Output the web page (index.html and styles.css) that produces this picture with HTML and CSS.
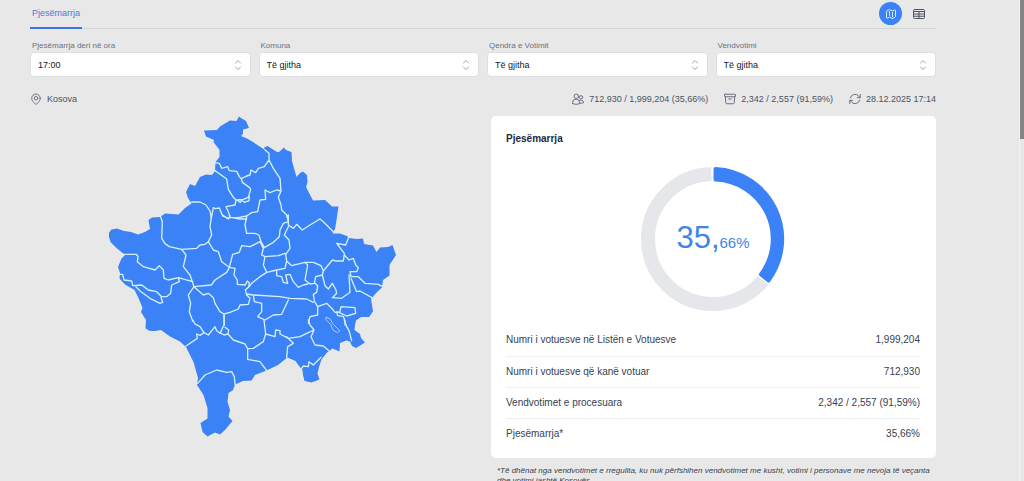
FILE: index.html
```
<!DOCTYPE html>
<html lang="sq">
<head>
<meta charset="utf-8">
<meta name="viewport" content="width=device-width, initial-scale=1">
<title>Pjesëmarrja</title>
<link rel="stylesheet" href="styles.css">
</head>
<body>
<div class="viewport">
<main class="page">
  <header class="topbar">
    <nav><a class="tab" href="#pjesemarrja" aria-current="page">Pjesëmarrja</a></nav>
    <div class="views">
      <button class="view view-active" type="button" aria-label="Harta">
        <svg class="icon" viewBox="0 0 24 24"><path d="M9 6.8V15m6-6v8.2m.5 3.5 4.9-2.4c.4-.2.6-.6.6-1V4.8c0-.8-.9-1.4-1.6-1l-3.9 1.9c-.3.2-.7.2-1 0L9.5 3.3a1 1 0 0 0-1 0L3.6 5.7c-.4.2-.6.6-.6 1v12.500c0 .8.9 1.4 1.6 1l3.9-1.900c.3-.2.7-.2 1 0l5 2.400c.3.2.7.2 1 0Z"/></svg>
      </button>
      <button class="view" type="button" aria-label="Tabela">
        <svg class="icon" viewBox="0 0 24 24"><rect x="1" y="3" width="22" height="18" rx="2"/><path d="M1 7h22M1 12h22M1 16.500h22M12 7v14"/></svg>
      </button>
    </div>
  </header>

  <form class="filters">
    <div class="field">
      <label for="ora">Pjesëmarrja deri në ora</label>
      <div class="control"><select id="ora"><option>17:00</option></select><svg class="chevrons" viewBox="0 0 20 20"><path d="m5 6 5-5 5 5M5 14l5 5 5-5"/></svg></div>
    </div>
    <div class="field">
      <label for="komuna">Komuna</label>
      <div class="control"><select id="komuna"><option>Të gjitha</option></select><svg class="chevrons" viewBox="0 0 20 20"><path d="m5 6 5-5 5 5M5 14l5 5 5-5"/></svg></div>
    </div>
    <div class="field">
      <label for="qendra">Qendra e Votimit</label>
      <div class="control"><select id="qendra"><option>Të gjitha</option></select><svg class="chevrons" viewBox="0 0 20 20"><path d="m5 6 5-5 5 5M5 14l5 5 5-5"/></svg></div>
    </div>
    <div class="field">
      <label for="vendvotimi">Vendvotimi</label>
      <div class="control"><select id="vendvotimi"><option>Të gjitha</option></select><svg class="chevrons" viewBox="0 0 20 20"><path d="m5 6 5-5 5 5M5 14l5 5 5-5"/></svg></div>
    </div>
  </form>

  <div class="summary">
    <span class="stat stat-place"><svg class="icon" viewBox="0 0 24 24"><circle cx="12" cy="10.500" r="3.500"/><path d="M20.500 10.500c0 7-8.500 12.300-8.500 12.300S3.500 17.500 3.500 10.500a8.500 8.500 0 0 1 17 0Z"/></svg>Kosova</span>
    <span class="stat"><svg class="icon" viewBox="0 0 24 24"><circle cx="8.600" cy="6.500" r="4.500"/><circle cx="18" cy="8.500" r="3.300"/><path d="M1 21v-1.500a7 7 0 0 1 14.500 0V21c-4.500 2.200-10 2.200-14.500 0ZM15.500 20.500c2.800.2 5-.2 7.500-1a5 5 0 0 0-9-3.500"/></svg>712,930 / 1,999,204 (35,66%)</span>
    <span class="stat"><svg class="icon" viewBox="0 0 24 24"><rect x="1" y="2.500" width="22" height="5" rx="1"/><path d="m2.700 7.500.8 12c.1 1.200 1 2 2.200 2h12.600c1.200 0 2.100-.8 2.200-2l.8-12M9.500 12h5"/></svg>2,342 / 2,557 (91,59%)</span>
    <span class="stat"><svg class="icon" viewBox="0 0 24 24"><path d="M16.500 9.300h6V3M1.500 21v-6.300h6M2.500 10a9.700 9.700 0 0 1 16.200-4.500l3.800 3.800M1.500 14.700l3.800 3.800A9.700 9.700 0 0 0 21.500 14"/></svg>28.12.2025 17:14</span>
  </div>

  <div class="content">
    <section class="map-pane" aria-label="Harta e Kosovës">
      <svg class="map" viewBox="-6 18 930 966" role="img" aria-label="Kosova">
        <path class="land" transform="scale(3) translate(-100 -110)" d="M239 116.500 241 118 246 121 249 128 243 129.500 243 134 241 136 247 138.500 253 142 265 150 264 147.500 267.500 146 277 152 279 152 284 147.500 286 150 291.500 152 292 161 296.500 177 300 173 303 171.500 307 175 307.500 182 306 187 313 200.500 325 200 332 206.500 338.500 206.500 336.500 220 335 229 332.500 233.500 340 233.500 347 236 349 238 357 239 363 238.500 364 244 373 245.500 376.500 252 380 247.500 388 247 392.500 245 396 255 389.500 265 389.500 275.500 383 280 382 287.500 377 292 371 299 373 311.500 369 317 361 317 356 320.500 355 325 354.500 330 360 334 361 338 365 342.500 356 348 352 346 350 341.500 346.500 340.500 340 343 339.500 351.500 332.500 348.500 326.500 353 321.500 359.500 319 367 317.500 373.500 319.500 379.500 311.500 382.500 304.500 381 303 375 302.500 370 299 366 295.500 361 287.500 357.500 278 365 266.500 370.500 255 375 251.500 380.500 243 381 235 384.500 233 390 228.500 393 227.500 402 230 410 228.500 416.500 232.500 421 225 430 220 434.500 215 432.500 207.500 436.500 202.500 432 200.500 423 207.500 418.500 207.500 408 203.500 395 197 385 198 378 193.500 362 186 347 180 341.500 170 336.500 161 330 155 331 150 331 145.500 328.500 146 320 141 312 142.500 308 138.500 298 134.500 290 125 284.500 119.500 278.500 120 273 118 267 121.500 258.500 125 255 116.500 248 110.500 242 109 237 109 232.500 111.500 229.500 117 228.500 124 231 131 232 138 234.500 145 232 150 229 148.500 220 152 217.500 160 217 165 213.500 178.500 214.500 185 208 191.500 203.500 188 198 186 192 190 184 195 186 200 177 206 174.500 212 175 215 171 215.500 162 219.500 157 219.500 150 213.500 142 214 140 206 136.500 204 130.500 217 130 220 126.500 226.500 122.500 230 120.500 236.500 121Z"/>
        <g class="borders">
          <path d="M345 158 358 160 365 175 383 170 388 182 410 184 418 200 424 206 440 198M345 182 380 207 385 238 400 262 408 270 430 268 445 262 452 238 448 232 428 218 424 206M410 270 421 277 425 270 433 277 447 272 448 258M408 270 405 285 378 290 385 305 390 322 415 323 440 318M275 276 300 276 318 285 330 303 334 325 340 293 346 296 358 294 368 318 385 325"/>
          <g transform="translate(435 0)"><path d="M5 198 15 195 18 180 32 188 40 175 58 170 72 150M60 120 72 130 72 150 85 175 105 205 108 243 100 262 108 285 110 300 125 315 130 330M108 243 95 240 75 248 60 240 62 268 45 270 38 305 20 308 5 318"/></g>
          <g transform="translate(0 315)"><path d="M180 0 187 20 185 70 195 86 208 95 245 103 290 100 300 90 315 88 325 80 335 60 330 35 334 8M245 103 258 120 250 155 270 180 282 215 265 240 272 265 268 290 278 318M70 118 108 118 114 124 112 140 130 155 165 165 178 152 190 165 192 190 205 195 235 188 278 200M58 178 68 178 72 195 95 198 98 212 125 210 145 225 170 230 185 245 200 245 212 235 215 210 238 200 235 188M105 212 120 228 150 250 180 265 188 262 183 247M282 215 334 210 345 195 380 172 388 157 365 140 355 110 340 105 325 80M388 157 398 118 418 112 425 92 450 95M388 157 405 160 402 180 412 195 412 208 436 210 442 198 448 204 446 216 436 225 440 240 450 250 445 268 420 270 415 282 390 292 372 297 360 290 345 265 340 248 325 235 310 240 282 215M372 297 373 330M368 0 385 12 390 2M388 8 400 8 418 12 440 12"/></g>
          <g transform="translate(435 315)"><path d="M125 0 130 20 115 25 105 45 103 65 85 82 58 98 48 80 42 60 30 55 5 55 0 30 5 5M130 0 130 30 145 40 155 28 172 45 195 30 225 12 235 20 265 50M130 35 118 60 132 75 135 100 122 118 125 138M15 95 45 80 55 100 50 120 60 125 100 122 120 115M60 125 55 150 65 172 95 165 120 160 125 138 140 152 180 142 205 142 228 152 235 168 262 135 272 138 295 138 298 115 275 85 302 90 312 65M65 172 45 185 20 205 11 216M295 138 298 120 312 135 325 130 332 150 340 158 335 170 315 170 318 185 340 185 360 205 400 208 413 215M180 142 188 150 180 195 195 207 208 205 212 185 232 180 235 168M95 165 95 182 110 185 115 202 128 205 122 180 135 178 145 200 160 217 175 210 188 207M210 205 218 212 215 232 205 238 208 258 218 275M5 237 25 240 105 245 135 250 185 252 205 262M25 240 28 260 50 265 50 290 38 305 60 315 85 300 110 298 130 255M218 275 245 265 262 282 270 292 285 290 288 275 330 278 332 295 305 303 282 292M232 180 240 212 250 222 262 205 273 225 275 235 262 248 290 250 315 232 312 180M318 190 335 230 345 228 385 250M218 275 218 300 195 305 190 325M275 290 278 302 295 304 300 318 300 330"/></g>
          <g transform="translate(0 630)"><path d="M278 0 285 12 300 20 312 38 325 45 345 20 350 32 360 40 372 15 372 -15M258 78 292 55 290 42 300 46 312 38M360 38 372 45 384 42 386 30 375 22M384 42 400 60 435 72 443 86"/></g>
          <path d="M293 820 315 795 350 780 380 787 395 785 403 800 405 823"/>
          <g transform="translate(435 630)"><path d="M57 0 62 42 90 50 92 30 105 32 105 42 130 55 165 50 190 38 207 30 195 15 190 0M62 42 55 65 25 85 8 86 8 118 45 125 65 152M125 50 145 70 128 80 125 112M207 30 198 50 210 75 235 78 252 92M170 145 175 138 190 140 192 125 205 135 228 112M298 0 305 20 312 32 320 62"/></g>
          <path class="lake" d="M679 622 690 626 698 641 712 655 719 663 712 668 699 660 692 643 679 630Z"/>
        </g>
      </svg>
    </section>

    <section class="results">
      <article class="card">
        <h2>Pjesëmarrja</h2>
        <div class="donut">
          <svg class="ring" viewBox="0 0 144 144" aria-hidden="true">
            <circle class="track" cx="72" cy="72" r="65" pathLength="100" stroke-dasharray="63.600 36.400" stroke-dashoffset="-36" transform="rotate(-90 72 72)"/>
            <path class="value" d="M74.500 2A70 70 0 0 1 127.500 113.500L120 107.500A59.500 59.500 0 0 0 74.500 12.500Z"/>
          </svg>
          <p class="percent">35,<small>66%</small></p>
        </div>
        <table class="figures">
          <tbody>
            <tr><th scope="row">Numri i votuesve në Listën e Votuesve</th><td>1,999,204</td></tr>
            <tr><th scope="row">Numri i votuesve që kanë votuar</th><td>712,930</td></tr>
            <tr><th scope="row">Vendvotimet e procesuara</th><td>2,342 / 2,557 (91,59%)</td></tr>
            <tr><th scope="row">Pjesëmarrja*</th><td>35,66%</td></tr>
          </tbody>
        </table>
      </article>
      <p class="note">*Të dhënat nga vendvotimet e rregullta, ku nuk përfshihen vendvotimet me kusht, votimi i personave me nevoja të veçanta dhe votimi jashtë Kosovës.</p>
    </section>
  </div>
</main>
<div class="scroll-track" aria-hidden="true"><div class="scroll-thumb"></div></div>
</div>
</body>
</html>
```
FILE: styles.css
```
* { box-sizing: border-box; }

body {
  margin: 0;
  background: #e8e8e8;
  color: #374151;
  font: 9px/12px "Liberation Sans", Arial, sans-serif;
}

.viewport { display: flex; height: 100vh; overflow: hidden; }
.page { flex: 1; min-width: 0; padding: 0 83px 0 30px; }

.scroll-track { width: 5px; border-left: 1px solid #f2f2f2; background: #e8e8e8; }
.scroll-thumb { height: 29%; background: #858585; }

.icon {
  width: 12px;
  height: 12px;
  fill: none;
  stroke: currentColor;
  stroke-width: 2;
  stroke-linecap: round;
  stroke-linejoin: round;
}

.topbar {
  display: flex;
  justify-content: space-between;
  height: 29px;
  border-bottom: 1px solid #d2d4d8;
}
.tab {
  display: block;
  height: 29px;
  padding: 7px 2px 0;
  border-bottom: 2px solid #3b76de;
  color: #4a7bdc;
  text-decoration: none;
}
.views { display: flex; gap: 5px; padding: 2px 6px 0 0; }
.view {
  display: grid;
  place-items: center;
  width: 23px;
  height: 23px;
  padding: 0;
  border: 0;
  border-radius: 50%;
  background: none;
  color: #4b5563;
}
.view-active { background: #3b82f6; color: #dbeafe; }

.filters {
  display: grid;
  grid-template-columns: repeat(4, 1fr);
  gap: 8px;
  padding-top: 11px;
}
.field label {
  display: block;
  height: 12px;
  padding-left: 2px;
  color: #6b7280;
  font-size: 8px;
  line-height: 11px;
}
.control { display: grid; align-items: center; }
.control > * { grid-area: 1 / 1; }
.control select {
  appearance: none;
  width: 100%;
  height: 25px;
  padding: 0 7px;
  border: 1px solid #dddfe2;
  border-radius: 4px;
  background: #fff;
  color: #111827;
  font: inherit;
}
.chevrons {
  justify-self: end;
  width: 10px;
  height: 10px;
  margin-right: 8px;
  fill: none;
  stroke: #9ca3af;
  stroke-width: 2;
  stroke-linecap: round;
  stroke-linejoin: round;
  pointer-events: none;
}

.summary { display: flex; gap: 16px; padding: 16px 0 11px; color: #4b5563; }
.stat { display: flex; align-items: center; gap: 5px; height: 12px; white-space: nowrap; }
.stat .icon { color: #6b7280; }
.stat-place { margin-right: auto; }

.content { display: grid; grid-template-columns: 1fr 1fr; gap: 16px; }
.map-pane { display: flex; justify-content: center; align-items: flex-start; }
.map { width: 100%; max-width: 310px; }
.land { fill: #3b82f6; }
.borders { fill: none; stroke: #d5f0fa; stroke-width: 4; stroke-linejoin: round; stroke-linecap: round; }
.lake { stroke: #a5d0fb; stroke-width: 3; }

.card { padding: 16px 16px 9px 15px; border-radius: 5px; background: #fff; }
.card h2 { margin: 0; color: #1f2937; font-size: 10px; line-height: 14px; }

.donut { display: grid; place-items: center; padding: 21px 0 14px; }
.donut > * { grid-area: 1 / 1; }
.ring { width: 144px; height: 144px; }
.track { fill: none; stroke: #e5e7eb; stroke-width: 14; }
.value { fill: #3b82f6; stroke: #3b82f6; stroke-width: 4; stroke-linejoin: round; }
.percent { margin: 0; padding-top: 3px; color: #4384e4; font-size: 31px; line-height: 32px; }
.percent small { font-size: 15px; }

.figures { width: 100%; border-collapse: collapse; font-size: 10px; }
.figures th, .figures td { height: 31px; padding: 0; border-bottom: 1px solid #eceef0; }
.figures tr:last-child > * { border-bottom: 0; }
.figures th { font-weight: 400; text-align: left; }
.figures td { text-align: right; }

.note {
  margin: 0;
  padding: 8px 4px 0 6px;
  font-size: 8px;
  font-style: italic;
  line-height: 10px;
}
```
